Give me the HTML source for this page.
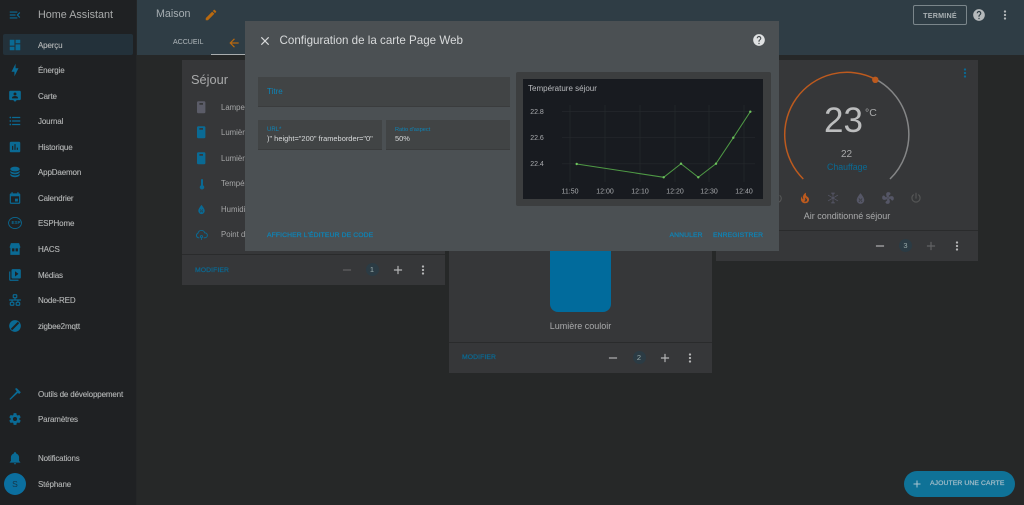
<!DOCTYPE html>
<html lang="fr"><head><meta charset="utf-8"><title>Home Assistant</title>
<style>
html,body{margin:0;padding:0;background:#262828}
#r{position:relative;width:1024px;height:505px;overflow:hidden;background:#262828;font-family:"Liberation Sans",sans-serif;color:#aaa;filter:blur(.35px)}
#r div,#r span.t{position:absolute;white-space:nowrap}
.t{line-height:12px;transform:translateY(calc(-50% + 1px))}
svg.i{position:absolute;fill:#0a6a94}
.nav{left:38px;font-size:8px;letter-spacing:-.15px;color:#b4b6b6;-webkit-text-stroke:.12px #b4b6b6}
.b{font-weight:normal;letter-spacing:.1px;font-size:6.8px;-webkit-text-stroke:.22px currentColor}
.card{background:#363739}
.bl{color:#0a6a94}
.bd{background:#2a2b2c;height:1px}
.badge{width:13px;height:13px;border-radius:50%;background:#2b3b44;color:#9aa;font-size:7.5px;line-height:13px;text-align:center}
.row{left:221px;font-size:7.8px;color:#a5a6a7}
</style></head><body>
<svg width="0" height="0" style="position:absolute">
<symbol id="menu" viewBox="0 0 24 24"><path d="M21,15.61L19.59,17L14.58,12L19.59,7L21,8.39L17.44,12L21,15.61M3,6H16V8H3V6M3,13V11H13V13H3M3,18V16H16V18H3Z"/></symbol>
<symbol id="dash" viewBox="0 0 24 24"><path d="M13,3V9H21V3M13,21H21V11H13M3,21H11V15H3M3,13H11V3H3V13Z"/></symbol>
<symbol id="bolt" viewBox="0 0 24 24"><path d="M11 15H6L13 1V9H18L11 23V15Z"/></symbol>
<symbol id="map" viewBox="0 0 24 24"><path fill-rule="evenodd" d="M4 3H20C21.1 3 22 3.9 22 5V17C22 18.1 21.1 19 20 19H15L12 22L9 19H4C2.9 19 2 18.1 2 17V5C2 3.9 2.9 3 4 3M12 6A2.5 2.5 0 0 0 9.5 8.5A2.5 2.5 0 0 0 12 11A2.5 2.5 0 0 0 14.500 8.5A2.500 2.500 0 0 0 12 6M7 16H17V14.500C17 13 14 12 12 12S7 13 7 14.500Z"/></symbol>
<symbol id="list" viewBox="0 0 24 24"><path d="M7,5H21V7H7V5M7,13V11H21V13H7M4,4.5A1.5,1.5 0 0,1 5.5,6A1.5,1.5 0 0,1 4,7.5A1.5,1.5 0 0,1 2.5,6A1.5,1.5 0 0,1 4,4.5M4,10.5A1.5,1.5 0 0,1 5.5,12A1.5,1.5 0 0,1 4,13.5A1.5,1.5 0 0,1 2.5,12A1.5,1.5 0 0,1 4,10.5M7,19V17H21V19H7M4,16.5A1.5,1.5 0 0,1 5.5,18A1.5,1.5 0 0,1 4,19.5A1.5,1.5 0 0,1 2.5,18A1.5,1.5 0 0,1 4,16.5Z"/></symbol>
<symbol id="chart" viewBox="0 0 24 24"><path d="M9 17H7V10H9V17M13 17H11V7H13V17M17 17H15V13H17V17M19 3H5C3.900 3 3 3.900 3 5V19C3 20.100 3.900 21 5 21H19C20.100 21 21 20.100 21 19V5C21 3.900 20.100 3 19 3Z" fill-rule="evenodd"/></symbol>
<symbol id="db" viewBox="0 0 24 24"><path d="M12,3C7.58,3 4,4.79 4,7C4,9.21 7.58,11 12,11C16.42,11 20,9.21 20,7C20,4.79 16.42,3 12,3M4,9V12C4,14.21 7.58,16 12,16C16.42,16 20,14.21 20,12V9C20,11.21 16.42,13 12,13C7.58,13 4,11.21 4,9M4,14V17C4,19.21 7.58,21 12,21C16.42,21 20,19.21 20,17V14C20,16.21 16.42,18 12,18C7.58,18 4,16.21 4,14Z"/></symbol>
<symbol id="cal" viewBox="0 0 24 24"><path fill-rule="evenodd" d="M19 4H18V2H16V4H8V2H6V4H5C3.900 4 3 4.900 3 6V20C3 21.100 3.900 22 5 22H19C20.100 22 21 21.100 21 20V6C21 4.900 20.100 4 19 4M19 20H5V9H19V20M12 13H17V18H12Z"/></symbol>
<symbol id="hacs" viewBox="0 0 24 24"><path fill-rule="evenodd" d="M5 2H19L21 8V10H20V22H4V10H3V8ZM7 11V16H11V11ZM13 11V16H17V11Z"/></symbol>
<symbol id="media" viewBox="0 0 24 24"><path fill-rule="evenodd" d="M4 6H2V20C2 21.100 2.900 22 4 22H18V20H4V6M20 2H8C6.900 2 6 2.900 6 4V16C6 17.100 6.900 18 8 18H20C21.100 18 22 17.100 22 16V4C22 2.900 21.100 2 20 2M12 14.500V5.500L18 10Z"/></symbol>
<symbol id="net" viewBox="0 0 24 24"><path fill-rule="evenodd" d="M10,2C8.89,2 8,2.89 8,4V7C8,8.11 8.89,9 10,9H11V11H2V13H6V15H5C3.89,15 3,15.89 3,17V20C3,21.11 3.89,22 5,22H9C10.11,22 11,21.11 11,20V17C11,15.89 10.11,15 9,15H8V13H16V15H15C13.89,15 13,15.89 13,17V20C13,21.11 13.89,22 15,22H19C20.11,22 21,21.11 21,20V17C21,15.89 20.11,15 19,15H18V13H22V11H13V9H14C15.11,9 16,8.11 16,7V4C16,2.89 15.11,2 14,2H10M10,4H14V7H10V4M5,17H9V20H5V17M15,17H19V20H15V17Z"/></symbol>
<symbol id="zig" viewBox="0 0 24 24"><circle cx="12" cy="12" r="10"/><path d="M6 18L18 6" stroke="#1f2123" stroke-width="3.500"/></symbol>
<symbol id="hammer" viewBox="0 0 24 24"><path d="M12 3L15 2L22 9L19 12L17 10L4 22L2.500 20.500L15 7.500Z"/></symbol>
<symbol id="cog" viewBox="0 0 24 24"><path fill-rule="evenodd" d="M12,15.5A3.5,3.5 0 0,1 8.5,12A3.5,3.5 0 0,1 12,8.5A3.5,3.5 0 0,1 15.5,12A3.5,3.5 0 0,1 12,15.5M19.43,12.97C19.47,12.65 19.5,12.33 19.5,12C19.5,11.67 19.47,11.34 19.43,11L21.54,9.37C21.73,9.22 21.78,8.95 21.66,8.73L19.66,5.27C19.54,5.05 19.27,4.96 19.05,5.05L16.56,6.05C16.04,5.66 15.5,5.32 14.87,5.07L14.5,2.42C14.46,2.18 14.25,2 14,2H10C9.75,2 9.54,2.18 9.5,2.42L9.13,5.07C8.5,5.32 7.96,5.66 7.44,6.05L4.95,5.05C4.73,4.96 4.46,5.05 4.34,5.27L2.34,8.73C2.21,8.95 2.27,9.22 2.46,9.37L4.57,11C4.53,11.34 4.5,11.67 4.5,12C4.5,12.33 4.53,12.65 4.57,12.97L2.46,14.63C2.27,14.78 2.21,15.05 2.34,15.27L4.34,18.73C4.46,18.95 4.73,19.03 4.95,18.95L7.44,17.94C7.96,18.34 8.5,18.68 9.13,18.93L9.5,21.58C9.54,21.82 9.75,22 10,22H14C14.25,22 14.46,21.82 14.5,21.58L14.87,18.93C15.5,18.67 16.04,18.34 16.56,17.94L19.05,18.95C19.27,19.03 19.54,18.95 19.66,18.73L21.66,15.27C21.78,15.05 21.73,14.78 21.54,14.63L19.43,12.97Z"/></symbol>
<symbol id="bell" viewBox="0 0 24 24"><path d="M21,19V20H3V19L5,17V11C5,7.9 7.03,5.17 10,4.29C10,4.19 10,4.1 10,4A2,2 0 0,1 12,2A2,2 0 0,1 14,4C14,4.1 14,4.19 14,4.29C16.97,5.17 19,7.9 19,11V17L21,19M14,21A2,2 0 0,1 12,23A2,2 0 0,1 10,21"/></symbol>
<symbol id="pencil" viewBox="0 0 24 24"><path d="M20.71,7.04C21.1,6.65 21.1,6 20.71,5.63L18.37,3.29C18,2.9 17.35,2.9 16.96,3.29L15.12,5.12L18.87,8.87M3,17.25V21H6.75L17.81,9.93L14.06,6.18L3,17.25Z"/></symbol>
<symbol id="close" viewBox="0 0 24 24"><path d="M19,6.41L17.59,5L12,10.59L6.41,5L5,6.41L10.59,12L5,17.59L6.41,19L12,13.41L17.59,19L19,17.59L13.41,12L19,6.41Z"/></symbol>
<symbol id="help" viewBox="0 0 24 24"><path fill-rule="evenodd" d="M15.07,11.25L14.17,12.17C13.45,12.89 13,13.5 13,15H11V14.5C11,13.39 11.45,12.39 12.17,11.67L13.41,10.41C13.78,10.05 14,9.55 14,9C14,7.89 13.1,7 12,7A2,2 0 0,0 10,9H8A4,4 0 0,1 12,5A4,4 0 0,1 16,9C16,9.88 15.64,10.67 15.07,11.25M13,19H11V17H13M12,2A10,10 0 0,0 2,12A10,10 0 0,0 12,22A10,10 0 0,0 22,12C22,6.47 17.5,2 12,2Z"/></symbol>
<symbol id="dots" viewBox="0 0 24 24"><path d="M12,16A2,2 0 0,1 14,18A2,2 0 0,1 12,20A2,2 0 0,1 10,18A2,2 0 0,1 12,16M12,10A2,2 0 0,1 14,12A2,2 0 0,1 12,14A2,2 0 0,1 10,12A2,2 0 0,1 12,10M12,4A2,2 0 0,1 14,6A2,2 0 0,1 12,8A2,2 0 0,1 10,6A2,2 0 0,1 12,4Z"/></symbol>
<symbol id="minus" viewBox="0 0 24 24"><path d="M19,13H5V11H19V13Z"/></symbol>
<symbol id="plus" viewBox="0 0 24 24"><path d="M19,13H13V19H11V13H5V11H11V5H13V11H19V13Z"/></symbol>
<symbol id="arrow" viewBox="0 0 24 24"><path d="M20,11V13H8L13.500,18.500L12.080,19.920L4.160,12L12.080,4.080L13.500,5.500L8,11H20Z"/></symbol>
<symbol id="sw" viewBox="0 0 24 24"><path d="M7 2H17C18.100 2 19 2.900 19 4V20C19 21.100 18.100 22 17 22H7C5.900 22 5 21.100 5 20V4C5 2.900 5.900 2 7 2M9 5V8H15V5Z" fill-rule="evenodd"/></symbol>
<symbol id="therm" viewBox="0 0 24 24"><path d="M10 4A2 2 0 0 1 14 4V14.500A4.500 4.500 0 1 1 10 14.500Z"/></symbol>
<symbol id="drop" viewBox="0 0 24 24"><path fill-rule="evenodd" d="M12 2C12 2 5 10 5 15A7 7 0 0 0 19 15C19 10 12 2 12 2M9.500 11.500L8.500 12.500L14.500 18.500L15.500 17.500ZM14.500 11.500L8.500 17.500L9.500 18.500L15.500 12.500Z"/></symbol>
<symbol id="cloud" viewBox="0 0 24 24"><path fill="none" stroke="currentColor" stroke-width="1.800" d="M8 18H6A4.500 4.500 0 0 1 5.500 9.500 6.500 6.500 0 0 1 18 9 4.500 4.500 0 0 1 18.500 18H16M12 14A2 2 0 0 0 12 18 2 2 0 0 0 12 14M12 18V22"/></symbol>
<symbol id="fire" viewBox="0 0 24 24"><path d="M17.660 11.200C17.430 10.900 17.150 10.640 16.890 10.380C16.220 9.780 15.460 9.350 14.820 8.720C13.330 7.260 13 4.850 13.950 3C13 3.230 12.170 3.750 11.460 4.320C8.870 6.400 7.850 10.070 9.070 13.220C9.110 13.320 9.150 13.420 9.150 13.550C9.150 13.770 9 13.970 8.800 14.050C8.570 14.150 8.330 14.090 8.140 13.930C8.080 13.880 8.040 13.830 8 13.760C6.870 12.330 6.690 10.280 7.450 8.640C5.780 10 4.870 12.300 5 14.470C5.060 14.970 5.120 15.470 5.290 15.970C5.430 16.570 5.700 17.170 6 17.700C7.080 19.430 8.950 20.670 10.960 20.920C13.100 21.190 15.390 20.800 17.030 19.320C18.860 17.660 19.500 15 18.560 12.720L18.430 12.460C18.220 12 17.660 11.200 17.660 11.200M14.500 17.500C14.220 17.740 13.760 18 13.400 18.100C12.280 18.500 11.160 17.940 10.500 17.280C11.690 17 12.400 16.120 12.610 15.230C12.780 14.430 12.460 13.770 12.330 13C12.210 12.260 12.230 11.630 12.500 10.940C12.690 11.320 12.890 11.700 13.130 12C13.900 13 15.110 13.440 15.370 14.800C15.410 14.940 15.430 15.080 15.430 15.230C15.460 16.050 15.100 16.950 14.500 17.500Z" fill-rule="evenodd"/></symbol>
<symbol id="snow" viewBox="0 0 24 24"><path fill="none" stroke="currentColor" stroke-width="1.300" d="M12 2V22M3.500 7L20.500 17M20.500 7L3.500 17M9 3L12 6 15 3M9 21L12 18 15 21"/></symbol>
<symbol id="fan" viewBox="0 0 24 24"><path d="M12 11A1 1 0 1 0 12 13 1 1 0 0 0 12 11M12.500 2C17 2 17.110 5.570 14.750 6.750C13.760 7.240 13.290 8.090 13.090 8.970C13.570 9.160 14 9.470 14.350 9.860C18.040 7.860 22 8.680 22 12.500C22 17 18.430 17.110 17.250 14.750C16.750 13.760 15.890 13.290 15 13.090C14.820 13.570 14.510 14 14.130 14.340C16.130 18.040 15.300 22 11.500 22C7 22 6.890 18.430 9.250 17.250C10.240 16.750 10.710 15.910 10.910 15.030C10.420 14.840 10 14.530 9.650 14.140C5.950 16.130 2 15.300 2 11.500C2 7 5.570 6.890 6.750 9.250C7.250 10.240 8.100 10.710 9 10.910C9.170 10.430 9.480 10 9.860 9.660C7.860 5.960 8.680 2 12.500 2Z" fill-rule="evenodd"/></symbol>
<symbol id="power" viewBox="0 0 24 24"><path d="M16.560,5.440L15.110,6.890C16.840,7.940 18,9.830 18,12A6,6 0 0,1 12,18A6,6 0 0,1 6,12C6,9.830 7.160,7.940 8.880,6.880L7.440,5.440C5.360,6.880 4,9.280 4,12A8,8 0 0,0 12,20A8,8 0 0,0 20,12C20,9.280 18.640,6.880 16.560,5.440M13,3H11V13H13"/></symbol>
</svg>

<div id="r">
<!-- sidebar -->
<div style="left:0;top:0;width:136px;height:505px;background:#1f2123"></div>
<div style="left:136px;top:0;width:1px;height:505px;background:#242627"></div>
<div style="left:3px;top:34px;width:130px;height:21px;background:#23313a;border-radius:2px"></div>
<svg class="i" style="left:8px;top:8px" width="14" height="14"><use href="#menu"/></svg>
<span class="t" style="position:absolute;left:38px;top:14px;font-size:10.800px;color:#a9abab">Home Assistant</span>

<svg class="i" style="left:8px;top:38px" width="14" height="14"><use href="#dash"/></svg><span class="t nav" style="position:absolute;top:44.500px">Aperçu</span>
<svg class="i" style="left:8px;top:63px" width="14" height="14"><use href="#bolt"/></svg><span class="t nav" style="position:absolute;top:69.500px">Énergie</span>
<svg class="i" style="left:8px;top:89px" width="14" height="14"><use href="#map"/></svg><span class="t nav" style="position:absolute;top:95.500px">Carte</span>
<svg class="i" style="left:8px;top:114px" width="14" height="14"><use href="#list"/></svg><span class="t nav" style="position:absolute;top:120.500px">Journal</span>
<svg class="i" style="left:8px;top:140px" width="14" height="14"><use href="#chart"/></svg><span class="t nav" style="position:absolute;top:146.500px">Historique</span>
<svg class="i" style="left:8px;top:165px" width="14" height="14"><use href="#db"/></svg><span class="t nav" style="position:absolute;top:172px">AppDaemon</span>
<svg class="i" style="left:8px;top:191px" width="14" height="14"><use href="#cal"/></svg><span class="t nav" style="position:absolute;top:197.500px">Calendrier</span>
<svg class="i" style="left:8px;top:216px;fill:none;stroke:#0a6a94" width="14" height="14" viewBox="0 0 24 24"><ellipse cx="12" cy="12" rx="11" ry="9.500" stroke-width="1.500"/></svg>
<span class="t" style="position:absolute;left:11.500px;top:222px;font-size:4.500px;color:#0a6a94;font-weight:bold">ESP</span><span class="t nav" style="position:absolute;top:223px">ESPHome</span>
<svg class="i" style="left:8px;top:242px" width="14" height="14"><use href="#hacs"/></svg><span class="t nav" style="position:absolute;top:248.500px">HACS</span>
<svg class="i" style="left:8px;top:268px" width="14" height="14"><use href="#media"/></svg><span class="t nav" style="position:absolute;top:274.500px">Médias</span>
<svg class="i" style="left:8px;top:293px" width="14" height="14"><use href="#net"/></svg><span class="t nav" style="position:absolute;top:300px">Node-RED</span>
<svg class="i" style="left:8px;top:319px" width="14" height="14"><use href="#zig"/></svg><span class="t nav" style="position:absolute;top:325.500px">zigbee2mqtt</span>
<svg class="i" style="left:8px;top:387px" width="14" height="14"><use href="#hammer"/></svg><span class="t nav" style="position:absolute;top:393.500px">Outils de développement</span>
<svg class="i" style="left:8px;top:412px" width="14" height="14"><use href="#cog"/></svg><span class="t nav" style="position:absolute;top:419px">Paramètres</span>
<svg class="i" style="left:8px;top:451px" width="14" height="14"><use href="#bell"/></svg><span class="t nav" style="position:absolute;top:458px">Notifications</span>
<div style="left:4px;top:473px;width:22px;height:22px;border-radius:50%;background:#0b6f9f;color:#16374a;font-size:8.500px;line-height:22px;text-align:center">S</div>
<span class="t nav" style="position:absolute;top:483.500px">Stéphane</span>

<!-- header -->
<div style="left:137px;top:0;width:887px;height:55px;background:#2f3d45"></div>
<span class="t" style="position:absolute;left:156px;top:13px;font-size:10.700px;color:#a6aeb2">Maison</span>
<svg class="i" style="left:204px;top:8px;fill:#b9690f" width="14" height="14"><use href="#pencil"/></svg>
<span class="t" style="position:absolute;left:173px;top:42px;font-size:7px;color:#a1a9ad;-webkit-text-stroke:.12px #a1a9ad">ACCUEIL</span>
<svg class="i" style="left:227px;top:35.500px;fill:#b9690f" width="14" height="14"><use href="#arrow"/></svg>
<div style="left:913px;top:5px;width:52px;height:18px;border:1px solid #7b868b;border-radius:2px;text-align:center;line-height:20px;color:#a9b0b3;font-size:7.200px;font-weight:bold;letter-spacing:.2px">TERMINÉ</div>
<svg class="i" style="left:972px;top:8px;fill:#b5b9bb" width="14" height="14"><use href="#help"/></svg>
<svg class="i" style="left:998px;top:8px;fill:#b5b9bb" width="14" height="14"><use href="#dots"/></svg>
<div style="left:211px;top:54px;width:36px;height:1px;background:#a9adae"></div>

<!-- card 1 -->
<div class="card" style="left:182px;top:60px;width:263px;height:225px"></div>
<span class="t" style="position:absolute;left:191px;top:78.500px;font-size:12.800px;color:#a9aaab">Séjour</span>
<svg class="i" style="left:194.300px;top:99.800px;fill:#5b5c68" width="14.400" height="14.400"><use href="#sw"/></svg><span class="t row" style="position:absolute;top:106.500px">Lampe</span>
<svg class="i" style="left:194.300px;top:125.300px" width="14.400" height="14.400"><use href="#sw"/></svg><span class="t row" style="position:absolute;top:132px">Lumière</span>
<svg class="i" style="left:194.300px;top:150.800px" width="14.400" height="14.400"><use href="#sw"/></svg><span class="t row" style="position:absolute;top:157.500px">Lumière</span>
<svg class="i" style="left:195.500px;top:177.700px" width="12" height="12"><use href="#therm"/></svg><span class="t row" style="position:absolute;top:183px">Tempér</span>
<svg class="i" style="left:196px;top:203.500px" width="11" height="11"><use href="#drop"/></svg><span class="t row" style="position:absolute;top:208.500px">Humidi</span>
<svg class="i" style="left:195px;top:228px;color:#0a6a94" width="13" height="13"><use href="#cloud"/></svg><span class="t row" style="position:absolute;top:234px">Point de</span>
<div class="bd" style="left:182px;top:254px;width:263px"></div>
<span class="t b bl" style="position:absolute;left:195px;top:269.500px">MODIFIER</span>
<svg class="i" style="left:340px;top:262.500px;fill:#626365" width="14" height="14"><use href="#minus"/></svg>
<div class="badge" style="left:365.500px;top:263px">1</div>
<svg class="i" style="left:391px;top:262.500px;fill:#b5b6b7" width="14" height="14"><use href="#plus"/></svg>
<svg class="i" style="left:416px;top:262.500px;fill:#b5b6b7" width="14" height="14"><use href="#dots"/></svg>

<!-- card 2 -->
<div class="card" style="left:449px;top:240px;width:263px;height:133px"></div>
<div style="left:550px;top:240px;width:61px;height:72px;background:#016b9c;border-radius:0 0 8px 8px"></div>
<span class="t" style="position:absolute;left:449px;width:263px;text-align:center;top:324.500px;font-size:9px;color:#a9aaab">Lumière couloir</span>
<div class="bd" style="left:449px;top:342px;width:263px"></div>
<span class="t b bl" style="position:absolute;left:462px;top:357px">MODIFIER</span>
<svg class="i" style="left:606px;top:350.700px;fill:#b5b6b7" width="14" height="14"><use href="#minus"/></svg>
<div class="badge" style="left:632.500px;top:351px">2</div>
<svg class="i" style="left:657.700px;top:350.700px;fill:#b5b6b7" width="14" height="14"><use href="#plus"/></svg>
<svg class="i" style="left:683px;top:350.700px;fill:#b5b6b7" width="14" height="14"><use href="#dots"/></svg>

<!-- card 3 -->
<div class="card" style="left:716px;top:60px;width:262px;height:201px"></div>
<svg class="i" style="left:958px;top:65.500px" width="14" height="14"><use href="#dots"/></svg>
<svg style="position:absolute;left:770px;top:60px" width="160" height="130" viewBox="770 60 160 130">
<path d="M803.300 179A62.300 62.300 0 0 1 875.300 79.100" fill="none" stroke="#bd5a1e" stroke-width="1.500"/>
<path d="M875.300 79.100A62.300 62.300 0 0 1 890 179" fill="none" stroke="#858687" stroke-width="1.500"/>
<circle cx="875.300" cy="79.800" r="3.200" fill="#bd5a1e"/>
</svg>
<span class="t" style="position:absolute;left:824px;top:120px;font-size:35px;color:#bcbdbe;line-height:40px">23</span>
<span class="t" style="position:absolute;left:865px;top:111.500px;font-size:10.500px;color:#a9aaab">°C</span>
<span class="t" style="position:absolute;left:841px;top:154px;font-size:10px;color:#a9aaab">22</span>
<span class="t" style="position:absolute;left:827px;top:166px;font-size:8.800px;color:#0a6a94">Chauffage</span>
<svg class="i" style="left:771px;top:191.500px;fill:#555656" width="13" height="13"><use href="#power"/></svg>
<svg class="i" style="left:798px;top:191px;fill:#bd5a1e" width="14" height="14"><use href="#fire"/></svg>
<svg class="i" style="left:826px;top:191px;color:#555666" width="14" height="14"><use href="#snow"/></svg>
<svg class="i" style="left:853.500px;top:191.500px;fill:#555666" width="13" height="13"><use href="#drop"/></svg>
<svg class="i" style="left:881px;top:191px;fill:#555666" width="14" height="14"><use href="#fan"/></svg>
<svg class="i" style="left:909px;top:191px;fill:#555656" width="14" height="14"><use href="#power"/></svg>
<span class="t" style="position:absolute;left:716px;width:262px;text-align:center;top:215px;font-size:9px;color:#a9aaab">Air conditionné séjour</span>
<div class="bd" style="left:716px;top:230px;width:262px"></div>
<svg class="i" style="left:873px;top:239px;fill:#b5b6b7" width="14" height="14"><use href="#minus"/></svg>
<div class="badge" style="left:899px;top:239px">3</div>
<svg class="i" style="left:924px;top:239px;fill:#626365" width="14" height="14"><use href="#plus"/></svg>
<svg class="i" style="left:949.700px;top:239px;fill:#b5b6b7" width="14" height="14"><use href="#dots"/></svg>

<!-- FAB -->
<div style="left:904px;top:471px;width:111px;height:26px;border-radius:13px;background:#0f7297"></div>
<svg class="i" style="left:911px;top:478px;fill:#a8c4d0" width="12" height="12"><use href="#plus"/></svg>
<span class="t b" style="position:absolute;left:930px;top:483px;color:#a2bdc9;font-size:6.800px;letter-spacing:.1px">AJOUTER UNE CARTE</span>

<!-- dialog -->
<div style="left:245px;top:21px;width:534px;height:230px;background:#4b5053"></div>
<svg class="i" style="left:257.500px;top:33.700px;fill:#d8dadb" width="14" height="14"><use href="#close"/></svg>
<span class="t" style="position:absolute;left:279.500px;top:40px;font-size:11.600px;color:#d8dadb">Configuration de la carte Page Web</span>
<svg class="i" style="left:752px;top:33px;fill:#dfe1e2" width="14" height="14"><use href="#help"/></svg>

<div style="left:258px;top:77px;width:252px;height:29px;background:#414445;border-bottom:1px solid #3a3c3d"></div>
<span class="t" style="position:absolute;left:267px;top:90.500px;font-size:8px;color:#0d85b8">Titre</span>
<div style="left:258px;top:120px;width:124px;height:29px;background:#414445;border-bottom:1px solid #3a3c3d"></div>
<span class="t" style="position:absolute;left:267px;top:128.500px;font-size:6px;color:#0d85b8">URL*</span>
<span class="t" style="position:absolute;left:267px;top:137.500px;font-size:7.450px;color:#d8dadb">)" height="200" frameborder="0"</span>
<div style="left:386px;top:120px;width:124px;height:29px;background:#414445;border-bottom:1px solid #3a3c3d"></div>
<span class="t" style="position:absolute;left:395px;top:128.500px;font-size:5.600px;color:#0d85b8">Ratio d'aspect</span>
<span class="t" style="position:absolute;left:395px;top:137.500px;font-size:7.450px;color:#d8dadb">50%</span>

<!-- preview -->
<div style="left:516px;top:72px;width:255px;height:134px;background:#3c3e3f;border-radius:2px"></div>
<div style="left:523px;top:79px;width:240px;height:120px;background:#181b20"></div>
<span class="t" style="position:absolute;left:528px;top:87.500px;font-size:8px;color:#b9bbbe">Température séjour</span>
<svg style="position:absolute;left:523px;top:79px" width="240" height="120" viewBox="523 79 240 120">
<g stroke="#25282c" stroke-width=".7">
<path d="M570 105V182M605 105V182M640 105V182M675 105V182M709 105V182M744 105V182"/>
<path d="M562 111.500H755M562 137.700H755M562 163.800H755"/>
</g>
<polyline fill="none" stroke="#4f9a45" stroke-width="1" points="576.700,164 663.700,177.300 681,163.700 698.300,177.300 716,163.700 733.300,137.700 750.300,111.700"/>
<g fill="#6fc45e"><circle cx="576.700" cy="164" r="1.200"/><circle cx="663.700" cy="177.300" r="1.200"/><circle cx="681" cy="163.700" r="1.200"/><circle cx="698.300" cy="177.300" r="1.200"/><circle cx="716" cy="163.700" r="1.200"/><circle cx="733.300" cy="137.700" r="1.200"/><circle cx="750.300" cy="111.700" r="1.200"/></g>
<g fill="#a9abae" font-family="Liberation Sans, sans-serif" font-size="7" text-anchor="middle">
<text x="537" y="113.800">22.8</text><text x="537" y="140">22.6</text><text x="537" y="166.200">22.4</text>
<text x="570" y="193.500">11:50</text><text x="605" y="193.500">12:00</text><text x="640" y="193.500">12:10</text><text x="675" y="193.500">12:20</text><text x="709" y="193.500">12:30</text><text x="744" y="193.500">12:40</text>
</g>
</svg>

<span class="t b" style="position:absolute;left:267px;top:234.500px;color:#0d85b8">AFFICHER L'ÉDITEUR DE CODE</span>
<span class="t b" style="position:absolute;left:669.500px;top:234.500px;color:#0d85b8">ANNULER</span>
<span class="t b" style="position:absolute;left:713px;top:234.500px;color:#0d85b8">ENREGISTRER</span>
</div>
</body></html>
